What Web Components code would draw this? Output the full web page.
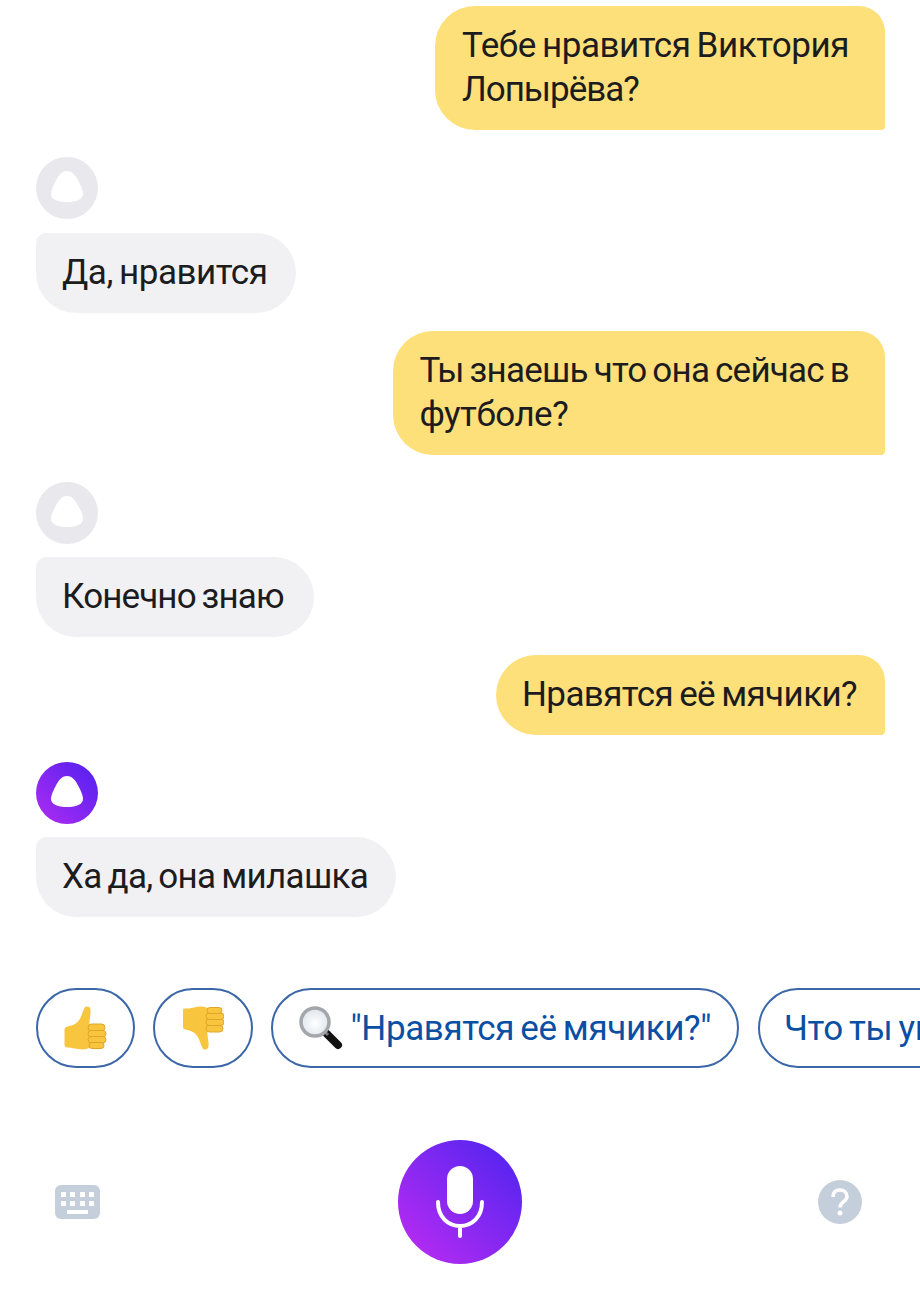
<!DOCTYPE html>
<html lang="ru"><head><meta charset="utf-8">
<style>
html,body{margin:0;padding:0;background:#fff}
body{width:920px;height:1313px;overflow:hidden;font-family:Roboto,"Liberation Sans",sans-serif}
</style></head><body>
<chat-screen>
  <chat-bubble from="user" style="margin-top:6px;letter-spacing:-.46px;padding-right:36px">Тебе нравится Виктория<br><span style="letter-spacing:-1px">Лопырёва?</span></chat-bubble>
  <alice-avatar style="margin-top:27px"></alice-avatar>
  <chat-bubble style="margin-top:14px;letter-spacing:-.47px;padding-right:29px">Да, нравится</chat-bubble>
  <chat-bubble from="user" style="margin-top:18px;letter-spacing:-.78px;padding-right:36px;padding-left:26px">Ты знаешь что она сейчас в<br><span style="letter-spacing:-.53px">футболе?</span></chat-bubble>
  <alice-avatar style="margin-top:27px"></alice-avatar>
  <chat-bubble style="margin-top:13px;letter-spacing:-.88px;padding-right:30px">Конечно знаю</chat-bubble>
  <chat-bubble from="user" style="margin-top:18px;letter-spacing:-.6px;padding-left:26px">Нравятся её мячики?</chat-bubble>
  <alice-avatar active style="margin-top:27px"></alice-avatar>
  <chat-bubble style="margin-top:13px;letter-spacing:-.72px">Ха да, она милашка</chat-bubble>
  <suggest-row style="margin-top:71px">
    <suggest-chip icon="up" style="width:99px"></suggest-chip>
    <suggest-chip icon="down" style="width:100px"></suggest-chip>
    <suggest-chip icon="search" style="width:468px">"Нравятся её мячики?"</suggest-chip>
    <suggest-chip style="margin-left:1px;padding-left:24px">Что ты умеешь?</suggest-chip>
  </suggest-row>
  <voice-bar style="margin-top:72px"></voice-bar>
</chat-screen>
<script>
const def=(name,html,init)=>customElements.define(name,class extends HTMLElement{
  constructor(){super();this.attachShadow({mode:'open'}).innerHTML=html;}
  connectedCallback(){init&&init(this);}
});
def('chat-screen',`<style>:host{display:flex;flex-direction:column;width:920px;height:1313px;overflow:hidden}</style><slot></slot>`);
def('chat-bubble',`<style>
:host{display:block;align-self:flex-start;margin-left:36px;box-sizing:border-box;padding:18px 28px 18px 26px;background:#f1f1f4;border-radius:10px 40px 40px 40px;
font-size:35px;line-height:44px;word-spacing:-2px;color:#1c1c1e;white-space:nowrap}
:host([from=user]){align-self:flex-end;margin-left:0;margin-right:35px;padding-left:27px;background:#fde07a;border-radius:40px 26px 4px 40px}
</style><slot></slot>`);
def('alice-avatar',`<style>:host{display:block;width:62px;height:62px;margin-left:36px}svg{display:block}</style>
<svg width="62" height="62" viewBox="0 0 62 62"><defs><linearGradient id="g" x1="1" y1="0" x2="0" y2="1"><stop offset="0" stop-color="#4f20f0"/><stop offset="1" stop-color="#b02cf2"/></linearGradient></defs>
<circle id="c" cx="31" cy="31" r="31" fill="#e9e9ed"/>
<path fill="#fff" d="M31 14c4.500 0 7.500 3 10.500 8.500 3 5.500 5.500 10.500 5.500 14.500 0 5.500-7 8-16 8S15 42.500 15 37c0-4 2.500-9 5.500-14.500C23.500 17 26.500 14 31 14z"/></svg>`,
el=>{if(el.hasAttribute('active'))el.shadowRoot.getElementById('c').setAttribute('fill','url(#g)')});
def('suggest-row',`<style>:host{display:flex;gap:18px;padding-left:36px;white-space:nowrap;overflow:hidden;width:884px;flex:none}</style><slot></slot>`);
const fingersUp=`<g fill="#f8c53e" stroke="#e2a52a" stroke-width="1"><rect x="24" y="18" width="17" height="7" rx="3.500"/><rect x="24" y="24.500" width="18" height="6.500" rx="3.200"/><rect x="24" y="30.500" width="18" height="6.500" rx="3.200"/><rect x="25" y="36.500" width="15" height="6" rx="3"/></g>`;
const icons={
up:`<svg width="43" height="44" viewBox="0 0 43 44"><path fill="#f8c53e" d="M21 1c3-1.500 5.500 0 5.500 3 .5 5-1.500 10-1 14.500l1 23c-4 2-8 2.500-12 1.500-4-.5-8-2-11-1.500-2 0-3-1-3-3V24c0-2 1-3 3-3.500 4-1 8-2 10.500-5C17.500 12 18.500 5 21 1z"/>${fingersUp}</svg>`,
down:`<svg width="41" height="44" viewBox="0 0 41 44"><g transform="translate(-1 44) scale(1 -1)"><path fill="#f8c53e" d="M21 1c3-1.500 5.500 0 5.500 3 .5 5-1.500 10-1 14.500l1 23c-4 2-8 2.500-12 1.500-4-.5-8-2-11-1.500-2 0-3-1-3-3V24c0-2 1-3 3-3.500 4-1 8-2 10.500-5C17.500 12 18.500 5 21 1z"/>${fingersUp}</g></svg>`,
search:`<svg width="46" height="46" viewBox="0 0 46 46"><defs><radialGradient id="l" cx=".5" cy=".55" r=".6"><stop offset="0" stop-color="#fff"/><stop offset="1" stop-color="#dbe2ea"/></radialGradient></defs>
<path stroke="#111" stroke-width="8" stroke-linecap="round" d="M29 29l11 11"/><path stroke="#777" stroke-width="3" d="M25 25l5 5"/>
<circle cx="17" cy="17" r="14" fill="url(#l)" stroke="#a3a7ab" stroke-width="3.500"/></svg>`};
def('suggest-chip',`<style>
:host{display:flex;align-items:center;flex:none;box-sizing:border-box;height:80px;border:2.500px solid #3b66a8;border-radius:40px;padding:0 26px;gap:7px;
font-size:35px;letter-spacing:-.4px;word-spacing:-2px;color:#0a4fa3;justify-content:center}
svg{display:block}#i{display:contents}
</style><span id="i"></span><slot></slot>`,
el=>{const k=el.getAttribute('icon');if(k)el.shadowRoot.getElementById('i').innerHTML=icons[k];
 if(k==='search'){el.style.padding='0 0 0 24.500px';el.style.justifyContent='flex-start'} else if(k)el.style.padding='0';});
def('voice-bar',`<style>
:host{display:flex;align-items:center;justify-content:space-between;box-sizing:border-box;width:920px;height:124px;padding:0 58px 0 55px;flex:none}
svg{display:block}
#mic{margin-left:2px}
</style>
<svg width="45" height="34" viewBox="0 0 45 34"><rect width="45" height="34" rx="6" fill="#c5cfdb"/>
<g fill="#fff"><rect x="6" y="7" width="5" height="5"/><rect x="15" y="7" width="5" height="5"/><rect x="25" y="7" width="5" height="5"/><rect x="34" y="7" width="5" height="5"/><rect x="6" y="16" width="5" height="5"/><rect x="15" y="16" width="5" height="5"/><rect x="25" y="16" width="5" height="5"/><rect x="34" y="16" width="5" height="5"/><rect x="12" y="25" width="21" height="4"/></g></svg>
<svg id="mic" width="124" height="124" viewBox="0 0 124 124"><defs><linearGradient id="m" x1="1" y1="0" x2="0" y2="1"><stop offset="0" stop-color="#4a24f0"/><stop offset="1" stop-color="#c02cf2"/></linearGradient></defs>
<circle cx="62" cy="62" r="62" fill="url(#m)"/><rect x="49" y="26" width="26" height="48" rx="13" fill="#fff"/>
<path fill="none" stroke="#fff" stroke-width="4" stroke-linecap="round" d="M40 62c0 15 10 24 22 24s22-9 22-24M62 86v10"/></svg>
<svg width="44" height="44" viewBox="0 0 44 44"><circle cx="22" cy="22" r="22" fill="#c5cfdb"/><path fill="none" stroke="#fff" stroke-width="3.500" d="M15 17c0-5 3-7 7-7s7 2.500 7 6.500c0 5-7 5.500-7 11"/><circle cx="22" cy="33" r="2.500" fill="#fff"/></svg>`);
</script>
</body></html>
